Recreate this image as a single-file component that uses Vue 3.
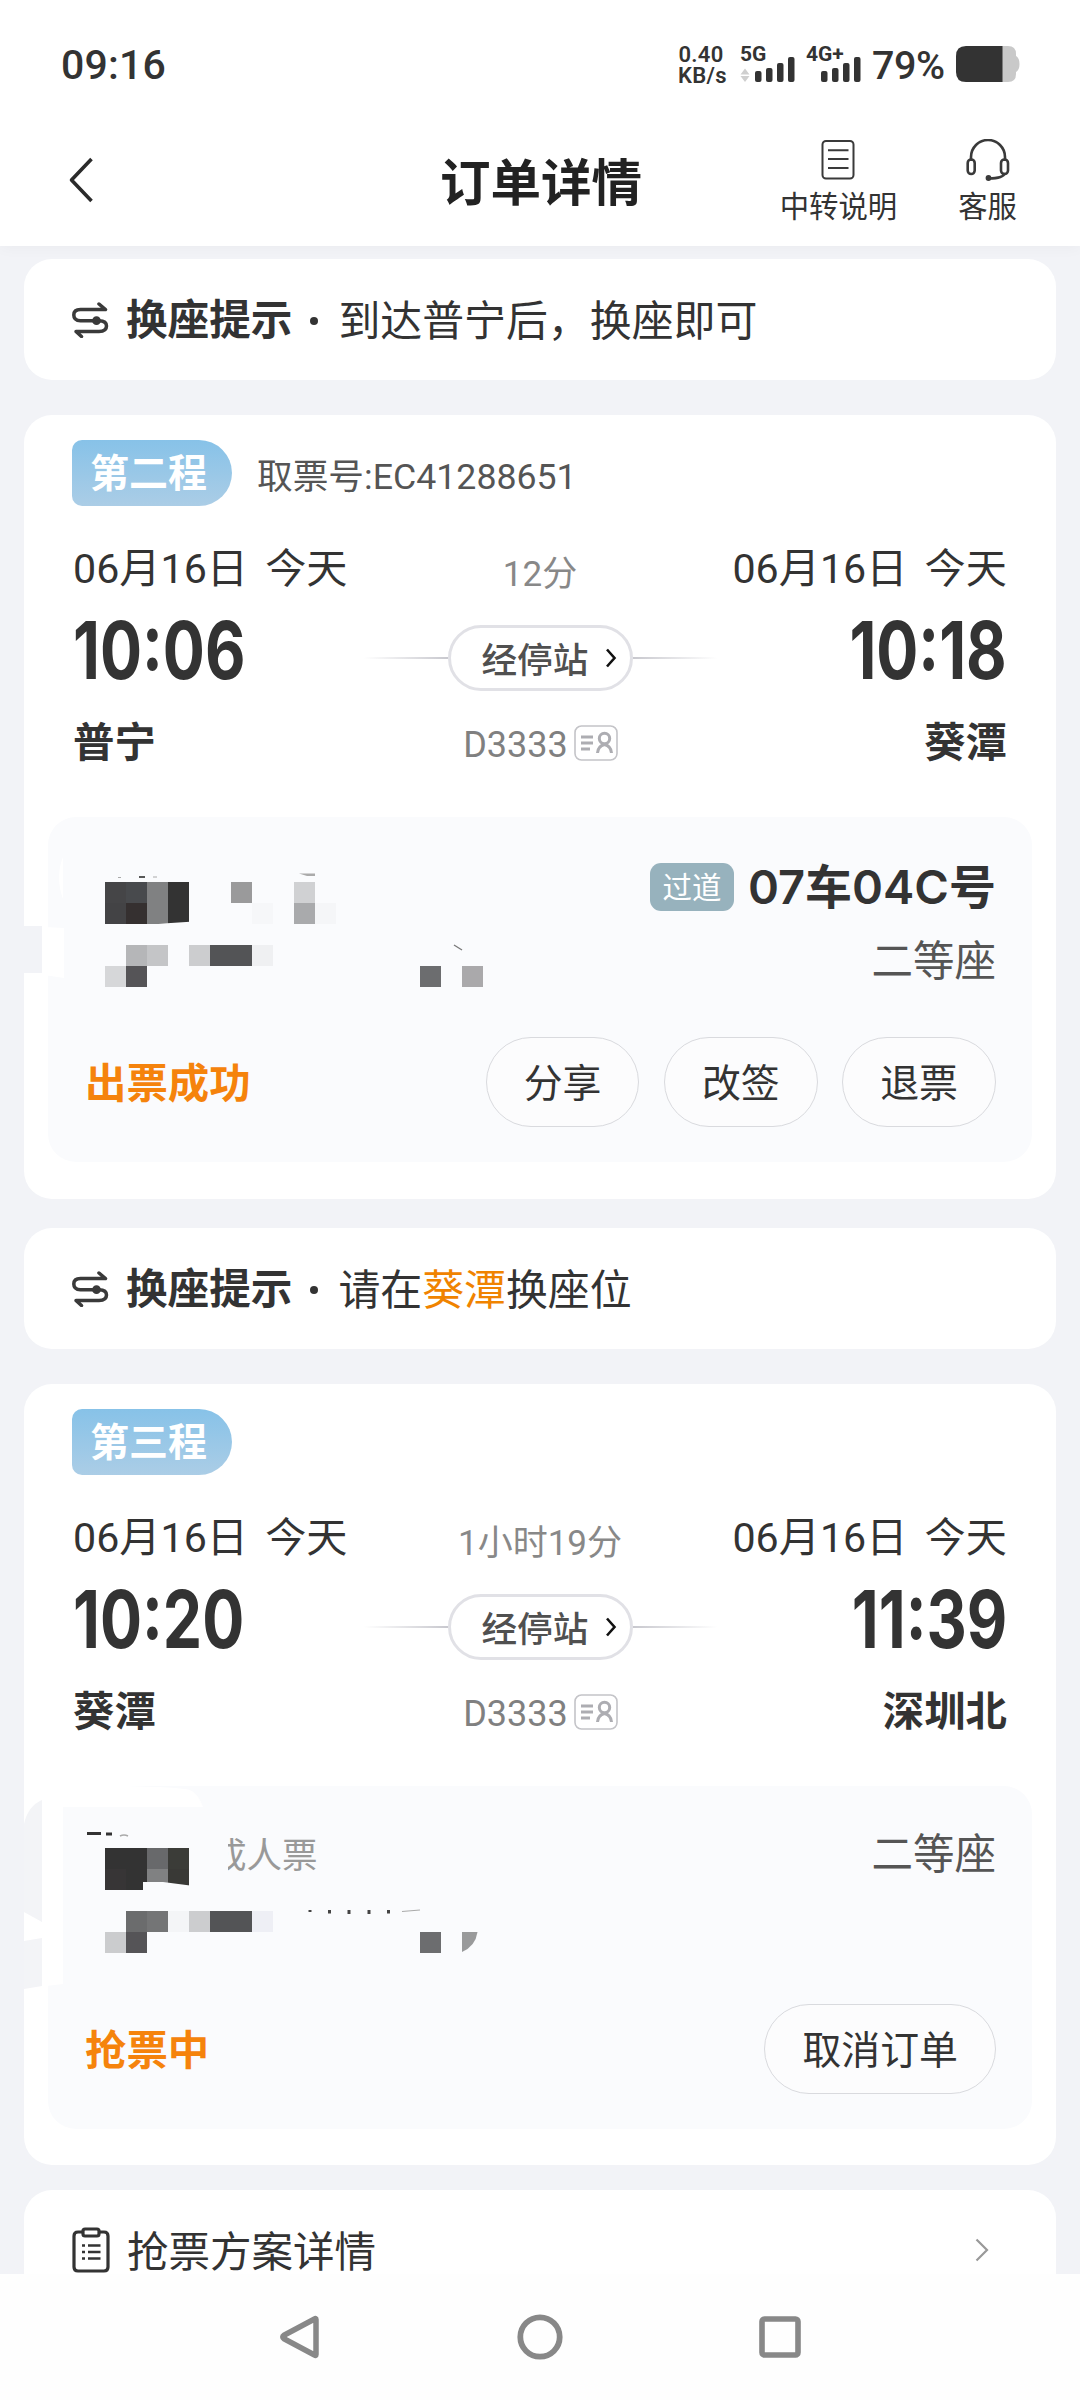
<script setup>
const bars = [0, 1, 2, 3]
const barHeights = [11, 14, 19, 25]

const sharedCells = [
  [189, 63, '#cccdcf'], [210, 63, '#535456'], [231, 63, '#535456']
]

const trips = [
  {
    hint: [{ t: '到达普宁后，换座即可' }],
    leg: '第二程',
    code: '取票号:EC41288651',
    from: { date: '06月16日 今天', time: '10:06', name: '普宁' },
    to: { date: '06月16日 今天', time: '10:18', name: '葵潭' },
    duration: '12分',
    train: 'D3333',
    seat: '07车04C号',
    seatTag: '过道',
    seatClass: '二等座',
    status: '出票成功',
    actions: ['分享', '改签', '退票'],
    maskTop: 65,
    cells: [
      [105, 0, '#454547'], [126, 0, '#484a4d'], [147, 0, '#808182'], [168, 0, '#333333'],
      [105, 21, '#434345'], [126, 21, '#353030'], [147, 21, '#808182'], [168, 21, '#333333'],
      [231, 0, '#9a9a9b'], [252, 21, '#f6f7f9'], [294, 0, '#d0d1d3'], [294, 21, '#a9aaac'], [315, 21, '#f5f6f8'],
      [126, 63, '#b5b6b8'], [147, 63, '#c4c5c7'], [252, 63, '#eff0f2'],
      [105, 84, '#d6d7d9'], [126, 84, '#555457'], [420, 84, '#6c6d6f'], [462, 84, '#aaa9ab'],
      ...sharedCells
    ]
  },
  {
    hint: [{ t: '请在' }, { t: '葵潭', hot: true }, { t: '换座位' }],
    leg: '第三程',
    code: '',
    from: { date: '06月16日 今天', time: '10:20', name: '葵潭' },
    to: { date: '06月16日 今天', time: '11:39', name: '深圳北' },
    duration: '1小时19分',
    train: 'D3333',
    seat: '',
    seatTag: '',
    seatClass: '二等座',
    status: '抢票中',
    actions: ['取消订单'],
    maskTop: 62,
    cells: [
      [105, 0, '#333333'], [126, 0, '#333333'], [147, 0, '#68696b'], [168, 0, '#3b3c38'],
      [105, 21, '#373536'], [126, 21, '#333333'], [147, 21, '#808182'], [168, 21, '#393936'],
      [126, 63, '#6b6c6d'], [147, 63, '#747576'], [168, 63, '#f4f5f7'], [252, 63, '#eeeff5'],
      [105, 84, '#cbccce'], [126, 84, '#555457'], [420, 84, '#6c6d6f'],
      ...sharedCells
    ]
  }
]
</script>

<template>
  <div class="screen">
    <header class="top">
      <div class="status">
        <span class="clock">09:16</span>
        <div class="tray">
          <div class="speed"><span>0.40</span><span>KB/s</span></div>
          <svg class="sig" width="50" height="36" viewBox="0 0 50 36">
            <text x="0" y="15" class="net">5G</text>
            <path d="M5 22.500l4.500 6h-9zM5 36l4.500-6h-9z" fill="#cfcfcf" />
            <rect v-for="b in bars" :key="b" :x="15 + b * 11" :y="36 - barHeights[b]" width="6.500" :height="barHeights[b]" rx="2" fill="#333" />
          </svg>
          <svg class="sig2" width="56" height="36" viewBox="0 0 56 36">
            <text x="0" y="15" class="net">4G+</text>
            <rect v-for="b in bars" :key="b" :x="15 + b * 11" :y="36 - barHeights[b]" width="6.500" :height="barHeights[b]" rx="2" fill="#333" />
          </svg>
          <span class="pct">79%</span>
          <svg width="64" height="36" viewBox="0 0 64 36">
            <path d="M46 0h6q8 0 8 8v2q3.500 2 3.500 8t-3.500 8v2q0 8-8 8h-6z" fill="#c9c9c9" />
            <path d="M46.500 0H10Q0 0 0 10v16q0 10 10 10h36.500z" fill="#333" />
          </svg>
        </div>
      </div>
      <div class="bar">
        <svg class="back" width="26" height="46" viewBox="0 0 26 46"><path d="M23.500 2L3.500 23l20 21" fill="none" stroke="#2b2b2b" stroke-width="3.600" stroke-linejoin="round" /></svg>
        <h1>订单详情</h1>
        <div class="tools">
          <div class="tool">
            <svg width="34" height="42" viewBox="0 0 34 42" fill="none" stroke="#3a3a3a" stroke-width="2">
              <rect x="1.500" y="2" width="31" height="37.500" rx="3.500" />
              <path d="M7 11.200h20.500M7 20h20.500M7 29h20.500" />
            </svg>
            <span>中转说明</span>
          </div>
          <div class="tool">
            <svg width="44" height="42" viewBox="0 0 44 42" fill="none" stroke="#3a3a3a" stroke-width="2.600">
              <path d="M5 22v-4a17 17 0 0 1 34 0v4" />
              <rect x="1.700" y="20.500" width="7" height="14.500" rx="3.500" />
              <rect x="35" y="20.500" width="7" height="14.500" rx="3.500" />
              <path d="M39 34q-2 5.500-16 5.500" />
              <circle cx="22.500" cy="39" r="1.600" fill="#3a3a3a" />
            </svg>
            <span>客服</span>
          </div>
        </div>
      </div>
    </header>

    <main>
      <template v-for="(trip, i) in trips" :key="i">
        <section class="hint">
          <svg width="37" height="36" viewBox="0 0 37 36" fill="none" stroke="#3a3a3a" stroke-width="3.500" stroke-linecap="round" stroke-linejoin="round">
            <path d="M27 2l6.500 5.500H8.500Q1.800 7.500 1.800 13T8.500 18.700H27q7.500 0 7.500 5.400T27 29.500H4l5.500 5" />
            <circle cx="24.500" cy="18.700" r="2.600" fill="#3a3a3a" />
          </svg>
          <b>换座提示</b><i></i>
          <span><em v-for="h in trip.hint" :key="h.t" :class="{ hot: h.hot }">{{ h.t }}</em></span>
        </section>

        <section class="card" :class="{ second: i === 1 }">
          <div class="leg"><span class="badge">{{ trip.leg }}</span><span class="code">{{ trip.code }}</span></div>
          <div class="route">
            <div class="end">
              <span class="date">{{ trip.from.date }}</span>
              <span class="time">{{ trip.from.time }}</span>
              <span class="name">{{ trip.from.name }}</span>
            </div>
            <div class="mid">
              <span class="dur">{{ trip.duration }}</span>
              <div class="stops">
                <span class="line"></span>
                <span class="pill"><em>经停站</em><svg width="12" height="20" viewBox="0 0 12 20"><path d="M2 1.500l7.500 8.500L2 18.500" fill="none" stroke="#111" stroke-width="2.600" /></svg></span>
                <span class="line flip"></span>
              </div>
              <div class="train"><span>{{ trip.train }}</span>
                <svg width="44" height="36" viewBox="0 0 44 36" fill="none">
                  <rect x="1" y="1" width="42" height="34" rx="6.500" stroke="#c4c4c8" stroke-width="1.600" />
                  <g stroke="#adadb2" stroke-width="3">
                    <path d="M7 12h12M7 18h12M7 24h9" />
                    <circle cx="30.500" cy="13.500" r="5.200" />
                    <path d="M23.500 28q.5-7 7-8.500 6.500 1.500 7 8.500" />
                  </g>
                </svg>
              </div>
            </div>
            <div class="end right">
              <span class="date">{{ trip.to.date }}</span>
              <span class="time">{{ trip.to.time }}</span>
              <span class="name">{{ trip.to.name }}</span>
            </div>
          </div>

          <div class="panel">
            <svg class="mask" width="500" height="250" viewBox="24 0 500 250">
              <template v-if="i === 0">
                <path d="M24 109h18v47H24z" fill="#f2f3f7" />
                <path d="M44 110l20 1v50l-20-3z" fill="#fff" />
                <path d="M63 40q-8 20 0 42z" fill="#fff" />
                <path d="M139 60h6" stroke="#444" stroke-width="1.800" />
                <path d="M153 60h4M118 60.500h3" stroke="#aaa" stroke-width="1" />
                <path d="M299 56.500h16v2.500h-8z" fill="#aaa" />
                <path d="M454 128l8 5" stroke="#777" stroke-width="1.300" />
              </template>
              <template v-else>
                <path d="M46 0h74q60 1 70 4 8 3 13 17H63v177l-17 2z" fill="#fff" />
                <path d="M24 38q4-18 18-24v122l-18-10zM24 155l18-3v48l-18 3z" fill="#f3f4f7" />
                <path d="M87 47.500h14M106 48h6" stroke="#333" stroke-width="3" />
                <path d="M120 50q4-2 8 0" stroke="#aaa" stroke-width="1.500" fill="none" />
                <g fill="#444">
                  <rect x="308.500" y="124" width="3" height="2" /><rect x="328" y="124" width="3" height="3.500" />
                  <rect x="347.500" y="124" width="3" height="4" /><rect x="367.500" y="124" width="3" height="4" />
                  <rect x="387" y="124" width="3" height="3.500" />
                </g>
                <path d="M402 125.500l18-1.500" stroke="#aaa" stroke-width="1.200" />
                <path d="M462 146h15.500q-2 14-15.500 20z" fill="#999a9b" />
              </template>
              <g shape-rendering="crispEdges">
                <rect v-for="(c, n) in trip.cells" :key="n" :x="c[0]" :y="c[1] + trip.maskTop" width="21" height="21" :fill="c[2]" />
              </g>
              <path v-if="i === 1" d="M143 96h20l27 3.500V105h-47z" fill="#fafbfd" />
              <path v-else d="M147 108l20-1.800 23-1.500V108z" fill="#fafbfd" />
            </svg>
            <div class="seatline">
              <span v-if="i === 1" class="kind"><span>成人票</span></span>
              <div class="seatinfo">
                <div v-if="trip.seat" class="seat"><span class="aisle">{{ trip.seatTag }}</span><b>{{ trip.seat }}</b></div>
                <span class="cls">{{ trip.seatClass }}</span>
              </div>
            </div>
            <div class="foot">
              <span class="state">{{ trip.status }}</span>
              <div class="acts"><button v-for="a in trip.actions" :key="a">{{ a }}</button></div>
            </div>
          </div>
        </section>
      </template>

      <section class="plan">
        <svg width="38" height="46" viewBox="0 0 38 46" fill="none" stroke="#333" stroke-width="3.200">
          <path d="M10 5H6Q2 5 2 9v31q0 4 4 4h26q4 0 4-4V9q0-4-4-4h-4" />
          <rect x="11" y="2" width="16" height="7" rx="2" />
          <path d="M10 18.500h3M10 25h3M10 31.500h3M16 18.500h12.500M16 25h12.500M16 31.500h12.500" stroke-width="2.600" />
        </svg>
        <span>抢票方案详情</span>
        <svg class="go" width="14" height="24" viewBox="0 0 14 24"><path d="M1.500 1.500L12 12 1.500 22.500" fill="none" stroke="#999" stroke-width="2.200" /></svg>
      </section>
    </main>

    <nav>
      <svg width="46" height="48" viewBox="0 0 46 48"><path d="M39 6.500v35q0 1.500-1.500.5L7 25.800q-2.500-1.800 0-3.600L37.500 6q1.500-1 1.500.5z" fill="none" stroke="#888" stroke-width="5.500" stroke-linejoin="round" /></svg>
      <svg width="46" height="48" viewBox="0 0 46 48"><circle cx="23" cy="24" r="19.700" fill="none" stroke="#888" stroke-width="5.800" /></svg>
      <svg width="46" height="48" viewBox="0 0 46 48"><rect x="5" y="6" width="36" height="36" rx="2.500" fill="none" stroke="#888" stroke-width="5.600" /></svg>
    </nav>
  </div>
</template>

<style>
body { margin: 0; background: #fff; }
</style>

<style scoped>
.screen {
  width: 1080px; height: 2400px; overflow: hidden; display: flex; flex-direction: column;
  background: #f2f3f7; color: #333;
  font-family: Roboto, "Noto Sans CJK SC", sans-serif;
}
svg { flex: none; display: block; }
em, i { font-style: normal; }
.top { height: 246px; flex: none; background: #fff; box-shadow: 0 2px 14px rgba(0, 0, 0, .035); }
.status { height: 128px; display: flex; justify-content: space-between; align-items: center; padding: 0 60px 0 61px; box-sizing: border-box; }
.clock { font-size: 41px; font-weight: 500; letter-spacing: .2px; padding-top: 2px; }
.tray { display: flex; align-items: center; }
.speed { display: flex; flex-direction: column; font-size: 22px; font-weight: 600; line-height: 21.500px; text-align: center; width: 46px; white-space: nowrap; margin-right: 16px; letter-spacing: .3px; padding-top: 2px; }
.net { font: 700 21px Roboto, sans-serif; fill: #333; }
.sig, .sig2 { overflow: visible; }
.sig { margin-right: 16px; }
.sig2 { margin-right: 10px; }
.pct { font-size: 39.500px; width: 75px; margin-right: 9px; font-weight: 500; letter-spacing: -.4px; padding-top: 2px; }
.bar { height: 118px; display: grid; grid-template-columns: 440px 200px 1fr; align-items: start; }
.back { margin: 29px 0 0 68px; }
h1 { margin: 20px 0 0; font-size: 50.500px; line-height: 72px; font-weight: 600; color: #222; white-space: nowrap; text-align: center; }
.tools { display: flex; justify-content: flex-end; gap: 61px; padding: 11px 63px 0 0; }
.tool { display: flex; flex-direction: column; align-items: center; font-size: 29.400px; line-height: 42px; }
.tool span { margin-top: 5px; }
main { flex: 1; min-height: 0; overflow: hidden; padding: 13px 24px 0; display: flex; flex-direction: column; }
.hint, .card, .plan { background: #fff; border-radius: 28px; flex: none; }
.hint { height: 121px; display: flex; align-items: center; padding: 0 48px; font-size: 41.900px; line-height: 60px; }
.hint b { margin-left: 17px; font-weight: 700; font-size: 41.600px; padding-top: 3px; }
.hint > span { padding-top: 4px; white-space: nowrap; }
.hint i { width: 8px; height: 8px; border-radius: 50%; background: #333; margin: 3px 20px 0 18px; }
.hot { color: #f08300; }
.card { height: 784px; margin: 35px 0 29px; padding: 25px 24px 0; box-sizing: border-box; display: flex; flex-direction: column; }
.card.second { height: 781px; margin-bottom: 25px; }
.leg { height: 66px; display: flex; align-items: center; padding-left: 24px; }
.badge { width: 160px; height: 66px; box-sizing: border-box; padding-left: 18px; border-radius: 10px 33px 33px 10px; background: linear-gradient(#87c2e8, #abcde6); color: #fff; font-size: 39px; line-height: 69px; font-weight: 600; white-space: nowrap; }
.code { margin-left: 25px; font-size: 35.700px; color: #555; }
.route { display: flex; justify-content: space-between; padding: 34px 25px 0 25px; height: 242px; flex: none; }
.end { width: 280px; display: flex; flex-direction: column; white-space: nowrap; }
.right { align-items: flex-end; }
.date { font-size: 41.200px; line-height: 58px; height: 56px; word-spacing: 7px; }
.time { font: 700 80px/108px Inter, sans-serif; height: 106px; transform: scaleX(.78); transform-origin: 0 50%; }
.right .time { transform-origin: 100% 50%; }
.name { font-size: 41.400px; line-height: 82px; height: 80px; font-weight: 600; }
.mid { width: 354px; display: flex; flex-direction: column; align-items: center; color: #808080; }
.dur { font-size: 35px; line-height: 56px; height: 56px; padding-top: 7px; color: #888; }
.stops { display: flex; align-items: center; height: 66px; margin-top: 22px; }
.line { width: 84px; height: 1.500px; background: linear-gradient(90deg, #fff, #c8c8ce); }
.flip { transform: scaleX(-1); }
.pill { width: 185px; height: 66px; box-sizing: border-box; border: 3px solid #e1e1e6; border-radius: 33px; display: flex; align-items: center; padding-left: 31px; font-size: 35.600px; font-weight: 500; color: #505050; }
.pill em { margin-top: -2px; }
.pill svg { margin-left: 17px; }
.train { display: flex; align-items: center; height: 60px; margin-top: 22px; font-size: 36px; gap: 6px; padding-left: 1px; }
.train span { padding-top: 4px; }
.panel { position: relative; height: 345px; margin-top: 35px; border-radius: 28px; background: #fafbfd; box-sizing: border-box; padding: 40px 36px 35px 38px; display: flex; flex-direction: column; justify-content: space-between; flex: none; }
.second .panel { height: 343px; }
.mask { position: absolute; left: -24px; top: 0; }
.seatline { display: flex; justify-content: flex-end; position: relative; }
.seatinfo { display: flex; flex-direction: column; align-items: flex-end; }
.seat { display: flex; align-items: center; height: 60px; gap: 14px; }
.seat b { font: 600 47px/62px Inter, "Noto Sans CJK SC", sans-serif; }
.aisle { width: 84px; height: 48px; border-radius: 11px; background: #97b2bd; color: #fff; font-size: 29.500px; line-height: 50px; text-align: center; }
.cls { font-size: 41.500px; line-height: 60px; margin-top: 15px; color: #555; }
.second .cls { margin-top: -1px; }
.kind { width: 90px; overflow: hidden; margin-right: auto; margin-left: 142px; font-size: 35.500px; line-height: 60px; color: #999; white-space: nowrap; }
.kind span { margin-left: -17px; display: inline-block; }
.foot { display: flex; justify-content: space-between; align-items: center; }
.state { font-size: 41.400px; font-weight: 600; color: #f5830c; line-height: 60px; margin-left: -1px; padding-top: 4px; }
.acts { display: flex; gap: 24.500px; }
button { font: 38.900px/60px Roboto, "Noto Sans CJK SC", sans-serif; color: #333; height: 90px; padding: 4px 37px 0; border: 1.500px solid #d9dade; border-radius: 45px; background: #fcfcfd; white-space: nowrap; }
.plan { height: 130px; box-sizing: border-box; display: flex; align-items: flex-start; padding: 37px 67px 0 48px; font-size: 41.500px; line-height: 51px; }
.plan span { margin-left: 17px; }
.go { margin: 11px 0 0 auto; }
nav { height: 126px; flex: none; background: #fefefe; display: flex; justify-content: center; gap: 194px; padding-top: 39px; box-sizing: border-box; }
</style>
